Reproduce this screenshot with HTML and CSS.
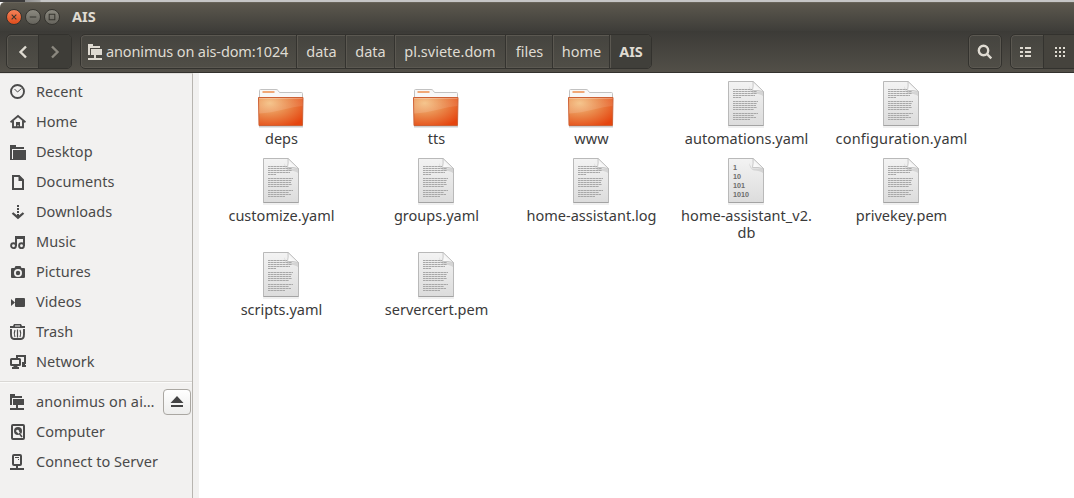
FILE: index.html
```html
<!DOCTYPE html>
<html lang="en">
<head>
<meta charset="utf-8">
<title>AIS</title>
<link rel="stylesheet" href="styles.css">
</head>
<body>
<svg class="defs" width="0" height="0" aria-hidden="true">
  <defs>
    <linearGradient id="paper" x1="0" y1="0" x2="0" y2="1"><stop offset="0" stop-color="#f3f3f3"/><stop offset="1" stop-color="#dcdcdc"/></linearGradient>
    <linearGradient id="fold" x1="0" y1="1" x2="1" y2="0"><stop offset="0" stop-color="#fff"/><stop offset=".5" stop-color="#f4f4f4"/><stop offset="1" stop-color="#c4c4c4"/></linearGradient>
    <radialGradient id="orange" cx=".25" cy=".2" r=".95"><stop offset="0" stop-color="#f4c083"/><stop offset=".45" stop-color="#ea8a4c"/><stop offset="1" stop-color="#e5450f"/></radialGradient>
    <linearGradient id="gloss" x1="0" y1="0" x2="0" y2="1"><stop offset="0" stop-color="#fff" stop-opacity=".06"/><stop offset="1" stop-color="#fff" stop-opacity=".14"/></linearGradient>
  </defs>
  <symbol id="folder" viewBox="0 0 48 40">
    <path d="M2 37.8h44" stroke="#000" stroke-opacity=".2" stroke-width="1.5"/>
    <path d="M2.500 12V1.500Q2.500.5 3.500.5H19Q20.500.5 21.200 1.600L22.500 3.500H44.500Q45.500 3.500 45.500 4.500V12z" fill="#f8f8f8" stroke="#c2c2c2"/>
    <path d="M5.500 3h12" stroke="#f0a877" stroke-width="2"/>
    <path d="M1.500 8.500h44.500l-.5 28H2z" fill="url(#orange)" stroke="#cd6034"/>
    <path d="M2 9h43.500v8C34 17.500 18 24 2 24.500z" fill="url(#gloss)"/>
    <path d="M2 9.500h43.500" stroke="#fff" stroke-opacity=".25"/>
  </symbol>
  <symbol id="sheet" viewBox="0 0 38 47">
    <path d="M1 46h36" stroke="#000" stroke-opacity=".12" stroke-width="1"/>
    <path d="M1.500.5H26L36.500 10.500V44.500H1.500z" fill="url(#paper)" stroke="#b9b9b9"/>
    <path d="M1.500 44.500h35" stroke="#a3a3a3"/>
    <path d="M22 5Q23 12 27 12.500Q33 12.500 36 15V10.500H25z" fill="#000" fill-opacity=".1"/>
    <path d="M26 .5Q26.500 5 25.500 9.500Q31 9 36.500 10.500z" fill="url(#fold)" stroke="#bdbdbd" stroke-width=".8"/>
  </symbol>
  <symbol id="doc" viewBox="0 0 38 47">
    <use href="#sheet" width="38" height="47"/>
    <path d="M6 8.500H25M6 10.500H30M6 12.500H30M6 14.500H28M6 16.500H14M6 20.500H31M6 22.500H30M6 24.500H29M6 26.500H30M6 28.500H27M6 32.500H31M6 34.500H27M6 36.500H29M6 38.500H23" stroke="#a8a8a8" stroke-width="1" stroke-dasharray="2.600 .4"/>
  </symbol>
  <symbol id="recent" viewBox="0 0 16 16"><circle cx="7.500" cy="7.500" r="6.500" fill="none" stroke="currentColor" stroke-width="1.900"/><path d="M4.500 5l3 3 4-3.500" fill="none" stroke="currentColor"/></symbol>
  <symbol id="home" viewBox="0 0 16 16"><path d="M.5 8.200L8 2l7.500 6.200" fill="none" stroke="currentColor" stroke-width="1.800"/><path d="M3 7v6.200h10V7" fill="none" stroke="currentColor" stroke-width="1.900"/><path d="M6 14V8h4v6H8.500v-3h-1v3z" fill="currentColor"/></symbol>
  <symbol id="desktop" viewBox="0 0 16 16"><path d="M0 1h6v2h8v2H2v11H0zM3 6h13v10H2V6z" fill="currentColor"/><path d="M2.500 15V5.500H14" fill="none" stroke="#f2f1f0"/></symbol>
  <symbol id="documents" viewBox="0 0 16 16"><path d="M3 2h6l4 4v9H3z" fill="none" stroke="currentColor" stroke-width="2"/><path d="M8.500 1v6H14L9 1z" fill="currentColor"/></symbol>
  <symbol id="downloads" viewBox="0 0 16 16"><path d="M7 1h2v2H7zM7 4h2v2H7zM7 7h2v2H7zM7 10h2v3H7z" fill="currentColor"/><path d="M2.500 9L8 13.700 13.500 9" fill="none" stroke="currentColor" stroke-width="2.300"/></symbol>
  <symbol id="music" viewBox="0 0 16 16"><path d="M6 12V3h8v9M6 4h8" fill="none" stroke="currentColor" stroke-width="2"/><circle cx="3.500" cy="11.700" r="2.400" fill="none" stroke="currentColor" stroke-width="1.900"/><circle cx="11.500" cy="11.700" r="2.400" fill="none" stroke="currentColor" stroke-width="1.900"/></symbol>
  <symbol id="pictures" viewBox="0 0 16 16"><path fill-rule="evenodd" d="M5.500 2h5l1 2H14q1 0 1 1v8q0 1-1 1H2q-1 0-1-1V5q0-1 1-1h2.500zM8 5a4 4 0 100 8 4 4 0 000-8z" fill="currentColor"/><circle cx="8" cy="9" r="2.200" fill="currentColor"/></symbol>
  <symbol id="videos" viewBox="0 0 16 16"><path d="M1 5l4 3.500L1 12zM6 4h8q1 0 1 1v7q0 1-1 1H6q-1 0-1-1V5q0-1 1-1z" fill="currentColor"/></symbol>
  <symbol id="trash" viewBox="0 0 16 16"><path d="M4 0h7l1 2h3v2H0V2h3z" fill="currentColor"/><path d="M5 2h5" stroke="#f2f1f0" stroke-width="1"/><path d="M1 5v5q0 5 3 5h7q3 0 3-5V5" fill="none" stroke="currentColor" stroke-width="1.900"/><path d="M5 6q-1.500 3.500 0 7M7.500 5.500v8M10 6q1.500 3.500 0 7" fill="none" stroke="currentColor" stroke-width="1.200"/></symbol>
  <symbol id="network" viewBox="0 0 16 16"><path d="M7 4V2h8v7h-3" fill="none" stroke="currentColor" stroke-width="2"/><rect x="1" y="5" width="9" height="6" rx=".5" fill="none" stroke="currentColor" stroke-width="2"/><path d="M3.500 12h4v1H9v2H2v-2h1.500zM12 10h3v1h1v2h-4z" fill="currentColor"/></symbol>
  <symbol id="remote" viewBox="0 0 16 16"><path d="M0 0h5v2h7v2H2v7H0zM3 5h11v6H3zM6 11h2v3H6zM0 14h14v2H0z" fill="currentColor"/></symbol>
  <symbol id="computer" viewBox="0 0 16 16"><rect x="2" y="1" width="12" height="14" rx="1" fill="none" stroke="currentColor" stroke-width="2"/><path d="M8 3a4 4 0 104 4 4 4 0 00-4-4z" fill="currentColor"/><circle cx="7.500" cy="7" r="1.300" fill="#f2f1f0"/><path d="M7.500 7l4.500 6" stroke="#f2f1f0" stroke-width="2"/><path d="M9 9l3 4" stroke="currentColor" stroke-width="1.500"/></symbol>
  <symbol id="server" viewBox="0 0 16 16"><rect x="3" y="1" width="8" height="10" rx="1" fill="none" stroke="currentColor" stroke-width="2"/><path d="M5 3.500h4M8 5.500h1" stroke="currentColor"/><path d="M6 12h2v2H6zM0 14h14v2H0z" fill="currentColor"/></symbol>
</svg>

<div class="window">
  <div class="backdrop"></div>
  <header class="titlebar">
    <span class="control close"><svg viewBox="0 0 15 15"><path d="M5 5l5 5M10 5l-5 5"/></svg></span>
    <span class="control"><svg viewBox="0 0 15 15"><path d="M4 7.500h7"/></svg></span>
    <span class="control"><svg viewBox="0 0 15 15"><path d="M4.500 4.500h6v6h-6z"/></svg></span>
    <h1 class="title">AIS</h1>
  </header>
  <nav class="toolbar">
    <div class="group history">
      <span class="button"><svg width="10" height="14" viewBox="0 0 10 14"><path d="M8 1.500L2.500 7 8 12.500"/></svg></span>
      <span class="button pressed"><svg width="10" height="14" viewBox="0 0 10 14"><path d="M2 1.500L7.500 7 2 12.500"/></svg></span>
    </div>
    <div class="group path">
      <span class="crumb host"><svg class="icon"><use href="#remote"/></svg><span class="host-name">anonimus on ais-dom:1024</span></span>
      <span class="crumb data">data</span>
      <span class="crumb data">data</span>
      <span class="crumb package">pl.sviete.dom</span>
      <span class="crumb files">files</span>
      <span class="crumb home">home</span>
      <span class="crumb current">AIS</span>
    </div>
    <div class="group search"><span class="button"><svg width="16" height="16" viewBox="0 0 16 16"><circle cx="6.500" cy="6.500" r="4.700"/><path d="M9.500 9.500l4.800 4.800"/></svg></span></div>
    <div class="group views">
      <span class="button"><svg class="solid" width="12" height="12" viewBox="0 0 12 12"><path d="M0 1h3v2H0zM5 1h6v2H5zM0 5h3v2H0zM5 5h6v2H5zM0 9h3v2H0zM5 9h6v2H5z"/></svg></span>
      <span class="button pressed"><svg class="solid" width="12" height="12" viewBox="0 0 12 12"><path d="M1 1h2v2H1zM5 1h2v2H5zM9 1h2v2H9zM1 5h2v2H1zM5 5h2v2H5zM9 5h2v2H9zM1 9h2v2H1zM5 9h2v2H5zM9 9h2v2H9z"/></svg></span>
    </div>
  </nav>
  <div class="body">
    <aside class="sidebar">
      <div class="place"><svg class="icon"><use href="#recent"/></svg><span>Recent</span></div>
      <div class="place"><svg class="icon"><use href="#home"/></svg><span>Home</span></div>
      <div class="place"><svg class="icon"><use href="#desktop"/></svg><span>Desktop</span></div>
      <div class="place"><svg class="icon"><use href="#documents"/></svg><span>Documents</span></div>
      <div class="place"><svg class="icon"><use href="#downloads"/></svg><span>Downloads</span></div>
      <div class="place"><svg class="icon"><use href="#music"/></svg><span>Music</span></div>
      <div class="place"><svg class="icon"><use href="#pictures"/></svg><span>Pictures</span></div>
      <div class="place"><svg class="icon"><use href="#videos"/></svg><span>Videos</span></div>
      <div class="place"><svg class="icon"><use href="#trash"/></svg><span>Trash</span></div>
      <div class="place"><svg class="icon"><use href="#network"/></svg><span>Network</span></div>
      <hr class="divider">
      <div class="place"><svg class="icon"><use href="#remote"/></svg><span class="mount">anonimus on ai…</span><div class="eject"><svg width="14" height="12" viewBox="0 0 14 12"><path d="M7 0l6.500 7H.5zM1 9h12v2H1z"/></svg></div></div>
      <div class="place"><svg class="icon"><use href="#computer"/></svg><span>Computer</span></div>
      <div class="place"><svg class="icon"><use href="#server"/></svg><span>Connect to Server</span></div>
    </aside>
    <main class="files-grid">
      <div class="file"><svg class="folder"><use href="#folder"/></svg><span>deps</span></div>
      <div class="file"><svg class="folder"><use href="#folder"/></svg><span>tts</span></div>
      <div class="file"><svg class="folder"><use href="#folder"/></svg><span>www</span></div>
      <div class="file"><svg class="doc"><use href="#doc"/></svg><span>automations.yaml</span></div>
      <div class="file"><svg class="doc"><use href="#doc"/></svg><span class="wide">configuration.yaml</span></div>
      <div class="file"><svg class="doc"><use href="#doc"/></svg><span>customize.yaml</span></div>
      <div class="file"><svg class="doc"><use href="#doc"/></svg><span>groups.yaml</span></div>
      <div class="file"><svg class="doc"><use href="#doc"/></svg><span>home-assistant.log</span></div>
      <div class="file"><svg class="doc" viewBox="0 0 38 47"><use href="#sheet" width="38" height="47"/><g class="digits"><text x="6" y="11.500">1</text><text x="6" y="20.500">10</text><text x="6" y="29.500">101</text><text x="6" y="38.500">1010</text></g></svg><span>home-assistant_v2.<br>db</span></div>
      <div class="file"><svg class="doc"><use href="#doc"/></svg><span>privekey.pem</span></div>
      <div class="file"><svg class="doc"><use href="#doc"/></svg><span>scripts.yaml</span></div>
      <div class="file"><svg class="doc"><use href="#doc"/></svg><span>servercert.pem</span></div>
    </main>
  </div>
</div>
</body>
</html>
```
FILE: styles.css
```css
* { box-sizing: border-box; }
body { margin: 0; font: 14.5px/17px "Noto Sans", "Open Sans", sans-serif; color: #3c3c3c; background: #fff; overflow: hidden; }
svg { display: block; flex: none; }
.defs { position: absolute; }
.window { width: 1074px; height: 498px; display: flex; flex-direction: column; }
.backdrop { height: 2px; flex: none; background: linear-gradient(90deg, #3c3b3b 25px, #8f8f8f 25px, #a8a8a8 40px, #c6c6c6 41px); }

.titlebar { height: 29px; flex: none; display: flex; align-items: center; gap: 3px; padding: 0 6px; background: linear-gradient(#5c584e, #3e3d39); border-top: 1px solid #68645a; border-radius: 5px 0 0 0; }
.control { width: 16px; height: 16px; border-radius: 50%; border: 1px solid #35342f; background: linear-gradient(#8b8980, #66645d); }
.control svg { width: 14px; height: 14px; fill: none; stroke: #36352f; stroke-width: 1.1; }
.close { background: linear-gradient(#f58259, #e04d1c); }
.title { margin: 0 0 0 9px; padding-bottom: 2px; font-size: 14.5px; line-height: 20px; font-weight: 700; color: #dfdbd2; }

.toolbar { height: 42px; flex: none; display: flex; align-items: flex-start; padding-top: 3px; background: linear-gradient(#3c3b37, #524f48); border-bottom: 1px solid #33322e; color: #dfdbd2; }
.group { height: 35px; display: flex; border: 1px solid #33322e; border-radius: 5px; background: linear-gradient(#45443f, #504e47); box-shadow: inset 0 0 0 1px #5b5851; overflow: hidden; }
.button { flex: 1; display: flex; align-items: center; justify-content: center; }
.button svg { fill: none; stroke: #dfdbd2; stroke-width: 2.4; }
.button svg.solid { fill: #dfdbd2; stroke: none; }
.button.pressed { background: #3e3d38; border-left: 1px solid #34332f; }
.history { width: 66px; margin-left: 6px; }
.history .button { flex: none; width: 31px; }
.history .button.pressed { width: 33px; }
.history .pressed svg { stroke: #8b887f; }
.path { width: 572px; margin-left: 8px; }
.crumb { display: flex; align-items: center; justify-content: center; border-right: 1px solid #34332f; box-shadow: inset 1px 0 #5b5851; flex: none; }
.host { width: 216px; gap: 3px; justify-content: flex-start; padding-left: 7px; }
.host .icon { margin-right: -1px; }
.host-name { letter-spacing: -.12px; white-space: nowrap; }
.data { width: 49px; padding-left: 1px; }
.package { width: 111px; }
.files { width: 47px; padding-left: 1px; }
.home { width: 57px; padding-left: 1px; }
.current { flex: 1; padding-left: 1px; background: #403f3a; font-weight: 700; border: 0; font-size: 14.5px; }
.search { width: 34px; margin-left: 316px; }
.views { width: 70px; margin: 0 -6px 0 8px; flex: none; }
.views .button { flex: none; width: 32px; padding-right: 2px; }
.views .button.pressed { background: #45433d; padding: 0; }

.body { flex: 1; display: flex; min-height: 0; }
.sidebar { width: 193px; padding-top: 3px; background: #f2f1f0; border-right: 1px solid #b8b5b0; border-top: 1px solid #e0dedb; color: #4a4a4a; flex: none; }
.place { height: 30px; display: flex; align-items: center; gap: 10px; padding-left: 10px; white-space: nowrap; }
.place span { padding-bottom: 2px; letter-spacing: .03px; }
.icon { width: 16px; height: 16px; }
.divider { height: 2px; margin: 4px 0; border: 0; border-top: 1px solid #dad8d5; background: #fbfbfa; }
.mount { width: 118px; }
.place .mount { letter-spacing: .13px; }
.eject { width: 28px; height: 26px; margin-left: -1px; display: flex; align-items: center; justify-content: center; border: 1px solid #aaa7a2; border-radius: 4px; background: linear-gradient(#fff, #ededec); fill: #444; }

.files-grid { flex: 1; border-left: 6px solid #f2f1f0; padding: 8px 0 0 4px; display: grid; grid-template-columns: repeat(5, 155px); grid-template-rows: 77px 94px 77px; color: #3a3a3a; }
.file { display: flex; flex-direction: column; align-items: center; text-align: center; }
.file svg { margin-bottom: 2px; }
.file span { padding-left: 2px; letter-spacing: .02px; }
.file .wide { letter-spacing: .18px; }
.doc { width: 38px; height: 47px; }
.file .folder { width: 48px; height: 40px; margin-top: 8px; margin-bottom: 1px; }
.digits { font: bold 7.2px "Liberation Sans", sans-serif; fill: #6c6c6c; }
```
